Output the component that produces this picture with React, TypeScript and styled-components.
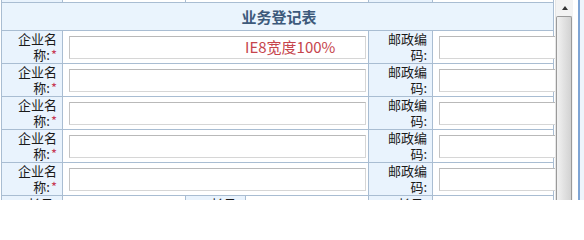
import React from "react";
import styled, { createGlobalStyle } from "styled-components";

const GlobalStyle = createGlobalStyle`
  html, body {
    margin: 0;
    padding: 0;
    background: #ffffff;
  }
  body {
    font-family: "Noto Sans CJK SC", "DejaVu Sans", sans-serif;
  }
`;

const Page = styled.div`
  display: flex;
  width: 584px;
  height: 200px;
  overflow: hidden;
`;

const TableArea = styled.div`
  width: 554px;
  padding-left: 1px;
  height: 200px;
  overflow: hidden;
`;

const FormTable = styled.table`
  border-collapse: collapse;
  table-layout: fixed;
  width: 552px;
  font-size: 13px;
  color: #1a1a1a;
`;

const Cell = styled.td<{ $label?: boolean; $stub?: boolean; $top?: boolean }>`
  border: 1px solid #a9bdd2;
  border-top: ${(p) => (p.$stub ? "0" : "1px solid #a9bdd2")};
  background: ${(p) => (p.$label ? "#e9f3fd" : "#ffffff")};
  padding: 0;
  height: ${(p) => (p.$stub ? "2px" : "32px")};
  vertical-align: ${(p) => (p.$top ? "top" : "middle")};
`;

const TitleCell = styled.td`
  border: 1px solid #a9bdd2;
  background: #eaf4fd;
  height: 27px;
  text-align: center;
  font-size: 15px;
  font-weight: bold;
  color: #3d5a7b;
  padding: 0 0 0 3px;
`;

const Label = styled.div`
  text-align: right;
  line-height: 16px;
  padding: 0 5px 0 4px;
`;

const Star = styled.span`
  color: #c73a55;
  margin-left: 1px;
`;

const InputWrap = styled.div`
  position: relative;
  padding: 0 2px 0 6px;
`;

const TextBox = styled.input`
  box-sizing: border-box;
  display: block;
  width: 100%;
  height: 23px;
  border: 1px solid #d6d6d6;
  border-top-color: #b9b9b9;
  border-left-color: #c4c4c4;
  background: #ffffff;
  margin: 0;
  padding: 0 3px;
  outline: none;
`;

const WideBox = styled(TextBox)`
  width: 118px;
`;

const Note = styled.span`
  position: absolute;
  left: 182px;
  top: 0;
  font-size: 15px;
  line-height: 21px;
  color: #c6454c;
  pointer-events: none;
`;

const ScrollBar = styled.div`
  width: 17px;
  height: 200px;
  display: flex;
  flex-direction: column;
  background: #f3f3f3;
  border-left: 1px solid #e6e6e6;
`;

const ArrowButton = styled.div`
  height: 15px;
  display: flex;
  align-items: center;
  justify-content: center;
`;

const Arrow = styled.div`
  width: 0;
  height: 0;
  border-left: 3px solid transparent;
  border-right: 3px solid transparent;
  border-bottom: 4px solid #333;
`;

const Thumb = styled.div`
  flex: 1;
  margin: 1px 1px 0 0;
  border: 1px solid #9a9a9a;
  border-bottom: 0;
  border-radius: 2px 2px 0 0;
  background: linear-gradient(to right, #f2f2f2, #e3e3e3 45%, #d2d2d2);
`;

const Gap = styled.div`
  width: 5px;
  background: #ffffff;
`;

const Edge = styled.div`
  flex: 1;
  border-left: 2px solid #7ea4d4;
  background: #eef4fb;
`;

const rows = [0, 1, 2, 3, 4];

export default function App() {
  return (
    <>
      <GlobalStyle />
      <Page>
        <TableArea>
          <FormTable>
            <colgroup>
              <col style={{ width: 61 }} />
              <col style={{ width: 123 }} />
              <col style={{ width: 60 }} />
              <col style={{ width: 123 }} />
              <col style={{ width: 64 }} />
              <col style={{ width: 121 }} />
            </colgroup>
            <tbody>
              <tr>
                <Cell $stub $label />
                <Cell $stub />
                <Cell $stub colSpan={2} />
                <Cell $stub $label />
                <Cell $stub />
              </tr>
              <tr>
                <TitleCell colSpan={6}>业务登记表</TitleCell>
              </tr>
              {rows.map((i) => (
                <tr key={i}>
                  <Cell $label>
                    <Label>
                      企业名称:<Star>*</Star>
                    </Label>
                  </Cell>
                  <Cell colSpan={3}>
                    <InputWrap>
                      <TextBox />
                      {i === 0 && <Note>IE8宽度100%</Note>}
                    </InputWrap>
                  </Cell>
                  <Cell $label>
                    <Label>邮政编码:</Label>
                  </Cell>
                  <Cell>
                    <InputWrap>
                      <WideBox />
                    </InputWrap>
                  </Cell>
                </tr>
              ))}
              <tr>
                <Cell $label $top>
                  <Label>工长号:</Label>
                </Cell>
                <Cell $top />
                <Cell $label $top>
                  <Label>工长号:</Label>
                </Cell>
                <Cell $top />
                <Cell $label $top>
                  <Label>工长号:</Label>
                </Cell>
                <Cell $top />
              </tr>
            </tbody>
          </FormTable>
        </TableArea>
        <ScrollBar>
          <ArrowButton>
            <Arrow />
          </ArrowButton>
          <Thumb />
        </ScrollBar>
        <Gap />
        <Edge />
      </Page>
    </>
  );
}
